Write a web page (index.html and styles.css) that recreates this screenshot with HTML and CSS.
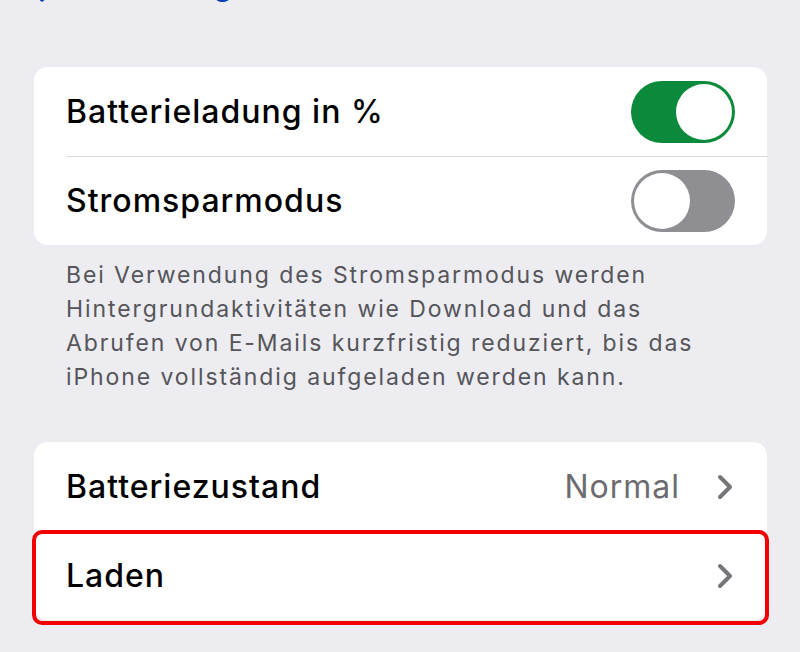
FILE: index.html
```html
<!DOCTYPE html>
<html lang="de">
<head>
<meta charset="utf-8">
<link rel="stylesheet" href="styles.css">
</head>
<body>
<header class="nav">
  <svg class="back-chev" width="20" height="36" viewBox="0 0 20 36"><path d="M16 3 L4 18 L16 33" fill="none" stroke="#0a3fb8" stroke-width="5" stroke-linecap="round" stroke-linejoin="round"/></svg>
  <span class="back-label">Einstellungen</span>
</header>
<main class="content">
  <section class="card">
    <div class="row">
      <span class="label">Batterieladung in %</span>
      <span class="toggle on"><span class="knob"></span></span>
    </div>
    <div class="row">
      <span class="label">Stromsparmodus</span>
      <span class="toggle off"><span class="knob"></span></span>
    </div>
  </section>
  <p class="footer">Bei Verwendung des Stromsparmodus werden<br>Hintergrundaktivitäten wie Download und das<br>Abrufen von E-Mails kurzfristig reduziert, bis das<br>iPhone vollständig aufgeladen werden kann.</p>
  <section class="card card2">
    <div class="row">
      <span class="label">Batteriezustand</span>
      <span class="detail">Normal</span>
      <svg class="chev" width="16" height="26" viewBox="0 0 16 26"><path d="M3 3 L13 13 L3 23" fill="none" stroke="#75757a" stroke-width="4" stroke-linecap="round" stroke-linejoin="round"/></svg>
    </div>
    <div class="row highlighted">
      <span class="label">Laden</span>
      <svg class="chev" width="16" height="26" viewBox="0 0 16 26"><path d="M3 3 L13 13 L3 23" fill="none" stroke="#75757a" stroke-width="4" stroke-linecap="round" stroke-linejoin="round"/></svg>
      <span class="mark"></span>
    </div>
  </section>
</main>
</body>
</html>
```
FILE: styles.css
```css
html, body {
  margin: 0;
  padding: 0;
}
body {
  background: #ececf1;
  font-family: "Inter", "Liberation Sans", sans-serif;
  color: #000;
  width: 800px;
  height: 652px;
  overflow: hidden;
}
.nav {
  height: 44px;
  margin-top: -38px;
  display: flex;
  align-items: center;
  padding-left: 26px;
  color: #0a3fb8;
}
.back-chev {
  flex: none;
}
.back-label {
  font-size: 32px;
  margin-left: 12px;
  line-height: 44px;
  letter-spacing: 1px;
}
.content {
  padding: 61px 33px 0 34px;
}
.card {
  background: #fff;
  border-radius: 14px;
}
.row {
  height: 89px;
  display: flex;
  align-items: center;
  padding: 0 32px;
  position: relative;
}
.row + .row::before {
  content: "";
  position: absolute;
  top: 0;
  left: 32px;
  right: 0;
  border-top: 1px solid #d9d9dd;
}
.label {
  font-size: 32px;
  font-weight: 500;
  letter-spacing: 1px;
  flex: 1;
}
.toggle {
  width: 104px;
  height: 62px;
  border-radius: 31px;
  position: relative;
  flex: none;
}
.toggle.on { background: #0b8a3b; }
.toggle.off { background: #8e8e93; }
.knob {
  position: absolute;
  top: 3px;
  width: 56px;
  height: 56px;
  border-radius: 50%;
  background: #fff;
}
.toggle.on .knob { right: 3px; }
.toggle.off .knob { left: 3px; }
.footer {
  margin: 13px 0 48px;
  padding: 0 32px;
  font-size: 23px;
  line-height: 34px;
  letter-spacing: 1.9px;
  color: #55555a;
  white-space: nowrap;
}
.detail {
  font-size: 32px;
  letter-spacing: 1px;
  color: #6c6c70;
  margin-right: 37px;
}
.chev {
  flex: none;
  margin-right: 2px;
}
.mark {
  position: absolute;
  top: -1px;
  left: -2px;
  right: -2px;
  bottom: -5px;
  border: 4px solid #f20000;
  border-radius: 10px;
}
.highlighted::before { display: none; }
```
